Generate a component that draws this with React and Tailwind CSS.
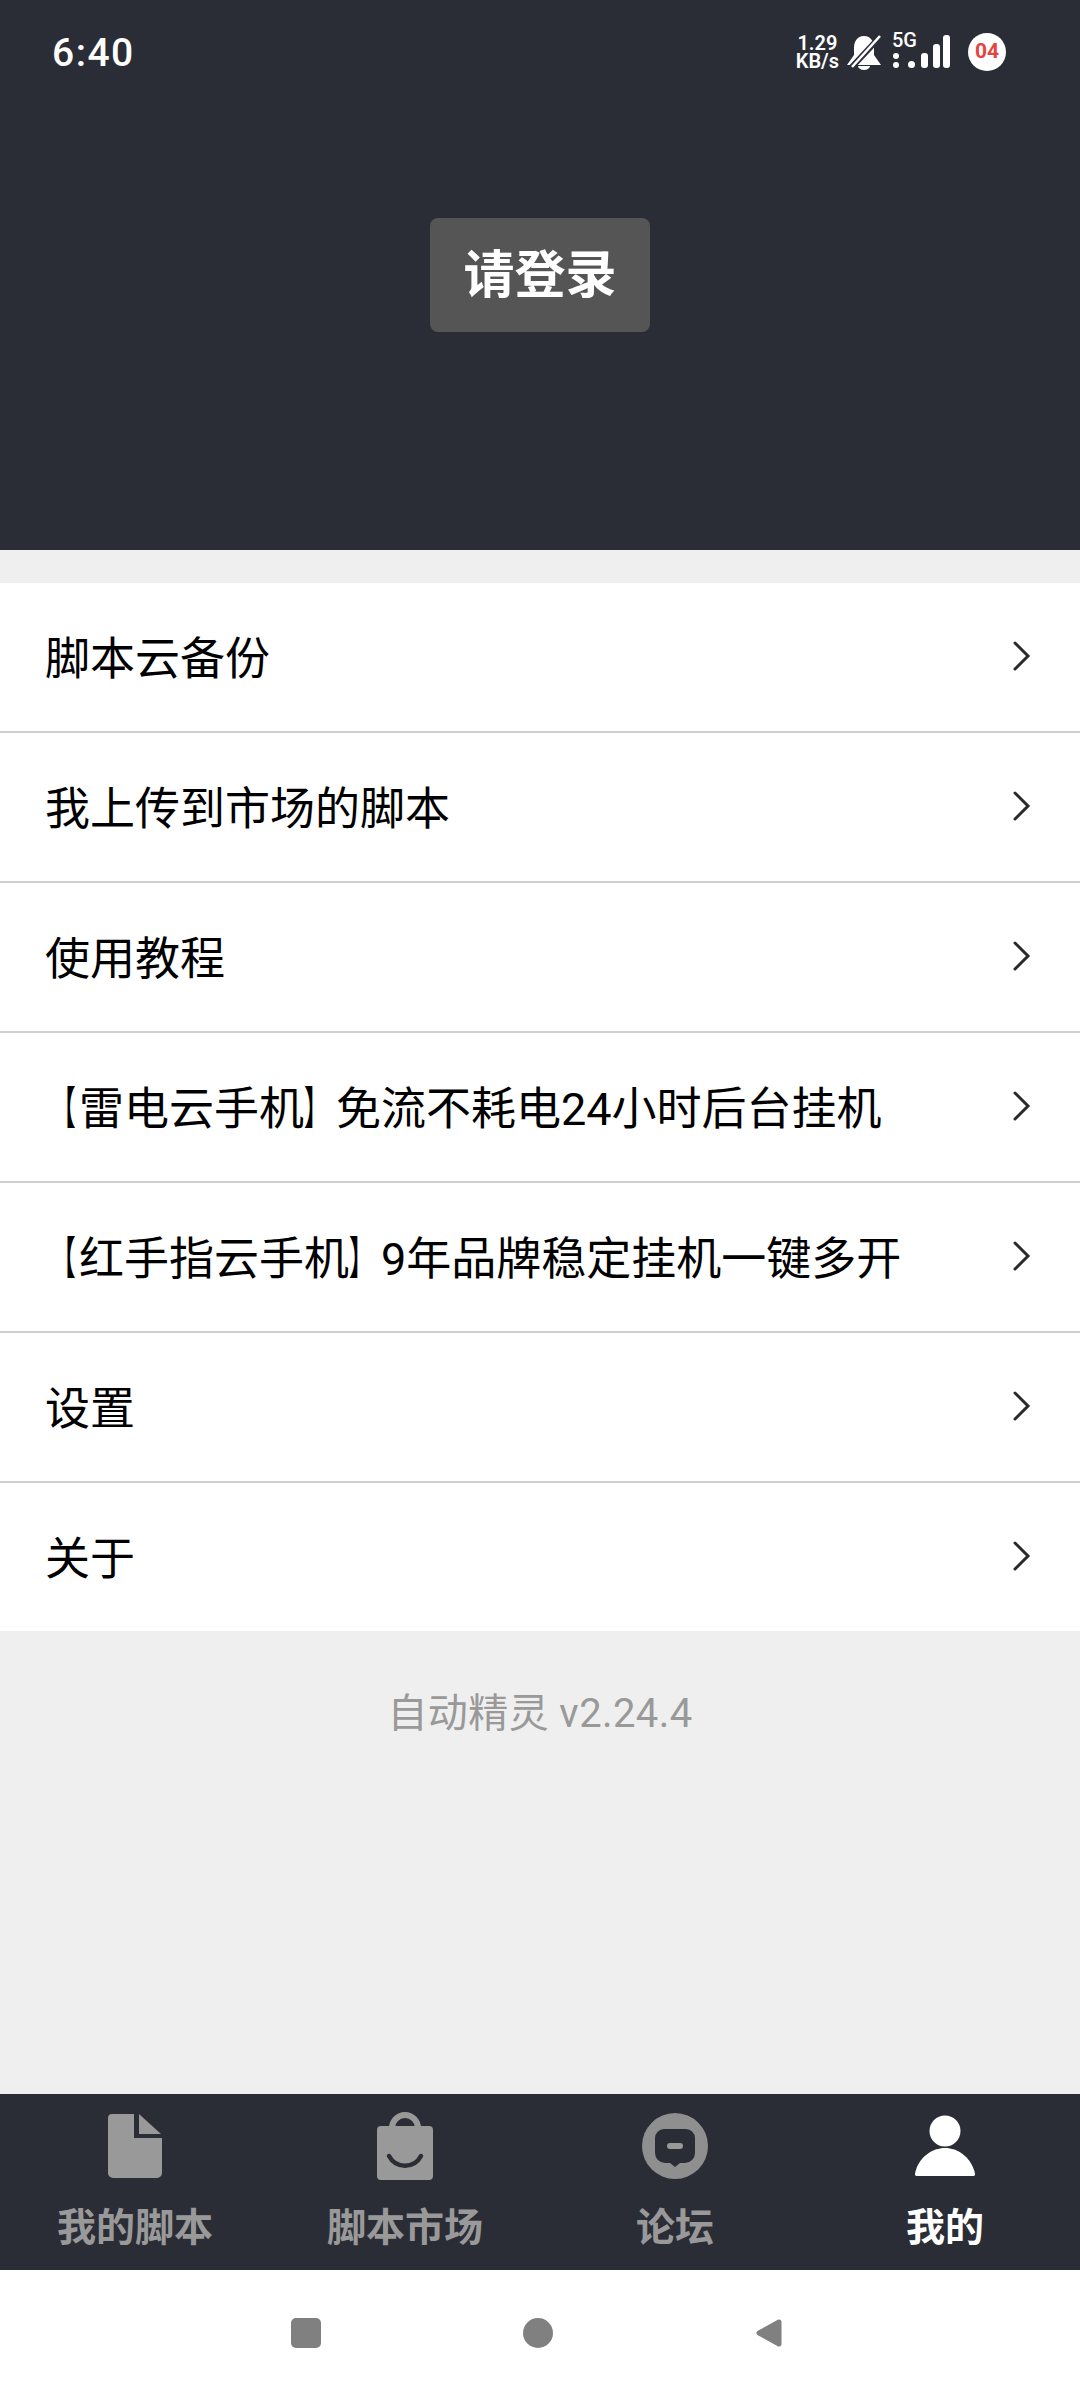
function OpenBracket() {
    return <span className="inline-block w-[34px] origin-left translate-x-[6px] scale-x-[0.55] whitespace-nowrap">【</span>;
}

function CloseBracket() {
    return <span className="inline-block w-[32px] origin-left scale-x-[0.55] whitespace-nowrap">】</span>;
}

const menuItems = [
    "脚本云备份",
    "我上传到市场的脚本",
    "使用教程",
    <><OpenBracket />雷电云手机<CloseBracket />免流不耗电24小时后台挂机</>,
    <><OpenBracket />红手指云手机<CloseBracket />9年品牌稳定挂机一键多开</>,
    "设置",
    "关于",
];

const FONT = "font-['Roboto','Noto_Sans_CJK_SC',sans-serif]";

function Chevron() {
    return (
        <svg width="20" height="30" viewBox="0 0 20 30" fill="none" className="mt-[-2px] shrink-0">
            <path d="M3 2 L16 15 L3 28" stroke="#2a2a2a" strokeWidth="3" strokeLinecap="round" strokeLinejoin="miter" />
        </svg>
    );
}

function StatusBar() {
    return (
        <div className="flex h-[104px] items-center pl-[52px] pr-[74px] text-white">
            <span className="mt-[2px] text-[39px] font-medium tracking-[1.5px]">6:40</span>
            <div className="ml-auto flex items-center">
                <div className="flex flex-col items-center text-[20px] font-semibold">
                    <span className="block h-[18px] leading-[18px]">1.29</span>
                    <span className="block h-[18px] leading-[18px]">KB/s</span>
                </div>
                <svg width="36" height="36" viewBox="0 0 36 36" className="ml-[7px]">
                    <path d="M18 2 C25 2 28 8 28 14 L28 21 L35 31 L1 31 L8 21 L8 14 C8 8 11 2 18 2 Z M12 32 H24 A6 4 0 0 1 12 32 Z" fill="#fff" />
                    <path d="M4 35 L33 4" stroke="#2b2d36" strokeWidth="6" />
                    <path d="M6 33 L34 2" stroke="#fff" strokeWidth="2.6" />
                </svg>
                <div className="relative ml-[8px] h-[36px] w-[60px]">
                    <span className="absolute top-[-3px] left-[2px] text-[20px] leading-[18px] font-medium">5G</span>
                    <svg width="60" height="36" viewBox="0 0 60 36">
                        <rect x="3" y="19" width="6" height="6" rx="3" fill="#fff" />
                        <rect x="3" y="28" width="6" height="6" rx="3" fill="#fff" />
                        <rect x="18" y="27" width="7" height="7" rx="3.5" fill="#fff" />
                        <rect x="31" y="19" width="7" height="15" rx="3" fill="#fff" />
                        <rect x="43" y="10" width="7" height="24" rx="3" fill="#fff" />
                        <rect x="53" y="1" width="7" height="33" rx="3" fill="#fff" />
                    </svg>
                </div>
                <div className="ml-[18px] flex h-[38px] w-[38px] items-center justify-center rounded-full bg-white text-[21px] font-bold text-[#e5443f]">
                    04
                </div>
            </div>
        </div>
    );
}

function FileIcon() {
    return (
        <svg width="54" height="64" viewBox="0 0 54 64">
            <path d="M4 0 H26 V24 H54 V59 A5 5 0 0 1 49 64 H5 A5 5 0 0 1 0 59 V4 A4 4 0 0 1 4 0 Z" fill="#999" />
            <path d="M31 0 L53 20 H31 Z" fill="#999" />
        </svg>
    );
}

function BagIcon() {
    return (
        <svg width="58" height="68" viewBox="0 0 58 68">
            <path d="M16 16 A13 13 0 0 1 42 16" fill="none" stroke="#999" strokeWidth="6" />
            <rect x="1" y="14" width="56" height="54" rx="4" fill="#999" />
            <path d="M13 44 C20 57 38 57 45 44" fill="none" stroke="#2b2d36" strokeWidth="4.5" strokeLinecap="round" />
        </svg>
    );
}

function ForumIcon() {
    return (
        <svg width="66" height="68" viewBox="0 0 66 68">
            <circle cx="33" cy="34" r="33" fill="#8f8f8f" />
            <path d="M22 17 H44 A9 9 0 0 1 53 26 V41 A10 10 0 0 1 43 51 H38 L33 55 L28 51 H23 A10 10 0 0 1 13 41 V26 A9 9 0 0 1 22 17 Z" fill="#2b2d36" />
            <rect x="25" y="31" width="16" height="6" rx="3" fill="#999" />
        </svg>
    );
}

function PersonIcon() {
    return (
        <svg width="60" height="62" viewBox="0 0 60 62">
            <circle cx="30" cy="16" r="15.5" fill="#fff" />
            <path d="M2 61 C-1 61 0 58 1 55 C5 42 17 33 30 33 C43 33 55 42 59 55 C60 58 61 61 58 61 Z" fill="#fff" />
        </svg>
    );
}

const tabs = [
    { label: "我的脚本", Icon: FileIcon },
    { label: "脚本市场", Icon: BagIcon },
    { label: "论坛", Icon: ForumIcon },
    { label: "我的", Icon: PersonIcon, active: true },
];

export default function App() {
    return (
        <div className={`flex h-[2400px] w-[1080px] flex-col overflow-hidden bg-white ${FONT}`}>
            {/* Header */}
            <header className="h-[550px] shrink-0 bg-[#2b2d36]">
                <StatusBar />
                <div className="mt-[114px] flex justify-center">
                    <button className="flex h-[114px] w-[220px] items-center justify-center rounded-[8px] bg-[#555555] pt-[2px] text-[51px] font-bold text-white">
                        请登录
                    </button>
                </div>
            </header>

            {/* Menu */}
            <main className="flex-1 bg-[#efefef] pt-[33px]">
                <div className="bg-white">
                    {menuItems.map((item, i) => (
                        <div
                            key={i}
                            className={`flex items-center justify-between pl-[45px] pr-[48px] text-[45px] text-black ${i < menuItems.length - 1 ? "h-[150px] border-b-2 border-[#cfcfcf]" : "h-[148px]"}`}
                        >
                            <span className="pt-[5px] whitespace-nowrap">{item}</span>
                            <Chevron />
                        </div>
                    ))}
                </div>
                <p className="mt-[58px] text-center text-[40px] leading-[50px] tracking-[0.4px] text-[#999999]">自动精灵 v2.24.4</p>
            </main>

            {/* Bottom tabs */}
            <nav className="grid h-[176px] shrink-0 grid-cols-4 bg-[#2b2d36]">
                {tabs.map(({ label, Icon, active }) => (
                    <div key={label} className="flex flex-col items-center pt-[18px]">
                        <div className="flex h-[68px] items-center justify-center">
                            <Icon />
                        </div>
                        <span className={`mt-[25px] text-[39px] leading-[46px] font-semibold ${active ? "text-white" : "text-[#999999]"}`}>
                            {label}
                        </span>
                    </div>
                ))}
            </nav>

            {/* System nav */}
            <div className="flex h-[130px] shrink-0 items-start justify-center gap-[202px] pt-[48px] pr-[6px]">
                <div className="h-[30px] w-[30px] rounded-[5px] bg-[#808080]" />
                <div className="h-[30px] w-[30px] rounded-full bg-[#808080]" />
                <svg width="28" height="30" viewBox="0 0 28 30">
                    <path d="M24 4 L4 15 L24 26 Z" fill="#808080" stroke="#808080" strokeWidth="5" strokeLinejoin="round" />
                </svg>
            </div>
        </div>
    );
}
